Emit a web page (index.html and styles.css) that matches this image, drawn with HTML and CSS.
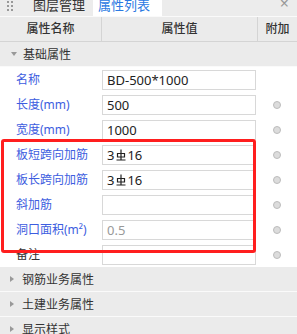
FILE: index.html
```html
<!DOCTYPE html>
<html lang="zh">
<head>
    <meta charset="UTF-8">
    <meta name="viewport" content="width=device-width, initial-scale=1.0">
    <title>属性列表</title>
    <link rel="stylesheet" href="styles.css">
</head>
<body>
    <div class="panel">
        <div class="tabbar">
            <div class="grip">
                <span></span><span></span><span></span><span></span><span></span><span></span>
            </div>
            <div class="tab">图层管理</div>
            <div class="tab active">属性列表</div>
            <div class="close">×</div>
        </div>

        <div class="head">
            <div class="hcell">属性名称</div>
            <div class="hcell">属性值</div>
            <div class="hcell">附加</div>
        </div>

        <div class="group open"><span class="arrow"></span>基础属性</div>

        <div class="rows">
            <div class="row">
                <div class="name">名称</div>
                <div class="val"><div class="box">BD-500*1000</div></div>
                <div class="extra"></div>
            </div>
            <div class="row">
                <div class="name">长度(mm)</div>
                <div class="val"><div class="box">500</div></div>
                <div class="extra"><span class="radio"></span></div>
            </div>
            <div class="row">
                <div class="name">宽度(mm)</div>
                <div class="val"><div class="box">1000</div></div>
                <div class="extra"><span class="radio"></span></div>
            </div>
            <div class="row">
                <div class="name">板短跨向加筋</div>
                <div class="val"><div class="box">3<svg class="bar" width="10" height="12" viewBox="0 0 10 12"><path d="M5 0.5V11.5M1.5 4.5h7v3.5h-7zM0.5 11h9" fill="none" stroke="#222" stroke-width="1.2"/></svg>16</div></div>
                <div class="extra"><span class="radio"></span></div>
            </div>
            <div class="row">
                <div class="name">板长跨向加筋</div>
                <div class="val"><div class="box">3<svg class="bar" width="10" height="12" viewBox="0 0 10 12"><path d="M5 0.5V11.5M1.5 4.5h7v3.5h-7zM0.5 11h9" fill="none" stroke="#222" stroke-width="1.2"/></svg>16</div></div>
                <div class="extra"><span class="radio"></span></div>
            </div>
            <div class="row">
                <div class="name">斜加筋</div>
                <div class="val"><div class="box"></div></div>
                <div class="extra"><span class="radio"></span></div>
            </div>
            <div class="row">
                <div class="name">洞口面积(m²)</div>
                <div class="val"><div class="box readonly">0.5</div></div>
                <div class="extra"><span class="radio"></span></div>
            </div>
            <div class="row">
                <div class="name plain">备注</div>
                <div class="val"><div class="box"></div></div>
                <div class="extra"><span class="radio"></span></div>
            </div>

            <!-- 标注框 -->
            <div class="mark"></div>
        </div>

        <div class="group"><span class="arrow"></span>钢筋业务属性</div>
        <div class="group"><span class="arrow"></span>土建业务属性</div>
        <div class="group"><span class="arrow"></span>显示样式</div>
    </div>
</body>
</html>
```

FILE: styles.css
```css
body {
    margin: 0;
    background-color: #ffffff;
    font-family: "Noto Sans", "Noto Sans CJK SC", sans-serif;
    font-size: 12px;
    color: #333;
}

.panel {
    width: 297px;
    height: 334px;
    overflow: hidden;
}

.tabbar {
    display: flex;
    height: 16px;
    overflow: hidden;
    background-color: #ececec;
    border-bottom: 1px solid #fafafa;
}

.grip {
    display: grid;
    grid-template-columns: 2px 2px;
    gap: 2px 2px;
    padding: 1px 0 0 7px;
    width: 23px;
    align-content: start;
}

.grip span {
    width: 2px;
    height: 2px;
    background-color: #999;
}

.tab {
    width: 59px;
    padding-left: 3px;
    margin-top: -5px;
    line-height: 20px;
    font-size: 13px;
    color: #333;
}

.tab.active {
    width: 64px;
    margin-left: 1px;
    padding-left: 5px;
    margin-top: 0;
    line-height: 10px;
    background-color: #fff;
    color: #2a7ae2;
}

.close {
    margin-left: auto;
    margin-right: 8px;
    margin-top: -6px;
    font-size: 16px;
    line-height: 18px;
    color: #999;
}

.head {
    display: grid;
    grid-template-columns: 101px 156px 40px;
    height: 24px;
    background-color: #ebebeb;
    border-bottom: 1px solid #d4d4d4;
}

.hcell {
    text-align: center;
    line-height: 24px;
    color: #333;
    font-weight: 500;
}

.hcell + .hcell {
    border-left: 1px solid #d4d4d4;
}

.group {
    display: flex;
    align-items: center;
    height: 24px;
    padding-left: 10px;
    background-color: #ebebeb;
    border-bottom: 1px solid #fafafa;
    color: #333;
}

.arrow {
    width: 0;
    height: 0;
    margin-right: 8px;
    border-top: 3px solid transparent;
    border-bottom: 3px solid transparent;
    border-left: 4px solid #999;
}

.group.open .arrow {
    border-left: 3px solid transparent;
    border-right: 3px solid transparent;
    border-top: 4px solid #999;
    border-bottom: 0;
    margin-right: 6px;
    margin-left: 1px;
}

.rows {
    position: relative;
}

.row {
    display: grid;
    grid-template-columns: 101px 156px 40px;
    height: 25px;
}

.name {
    padding-left: 16px;
    line-height: 25px;
    color: #3d5de0;
    white-space: nowrap;
}

.name.plain {
    color: #333;
}

.val {
    display: flex;
    align-items: center;
    padding: 0 1px;
}

.box {
    display: flex;
    align-items: center;
    box-sizing: border-box;
    width: 155px;
    height: 20px;
    padding-left: 4px;
    border: 1px solid #d8d8d8;
    background-color: #fff;
    font-size: 13px;
    color: #222;
}

.box.readonly {
    color: #999;
}

.bar {
    margin: 0 1px 0 2px;
}

.extra {
    display: flex;
    align-items: center;
    justify-content: center;
}

.radio {
    box-sizing: border-box;
    width: 8px;
    height: 8px;
    border: 1px solid #bcbcbc;
    border-radius: 50%;
    background-color: #dcdcdc;
}

.mark {
    position: absolute;
    left: 1px;
    top: 72px;
    width: 249px;
    height: 108px;
    border: 3px solid #ff1e1e;
    border-radius: 3px;
}
```
